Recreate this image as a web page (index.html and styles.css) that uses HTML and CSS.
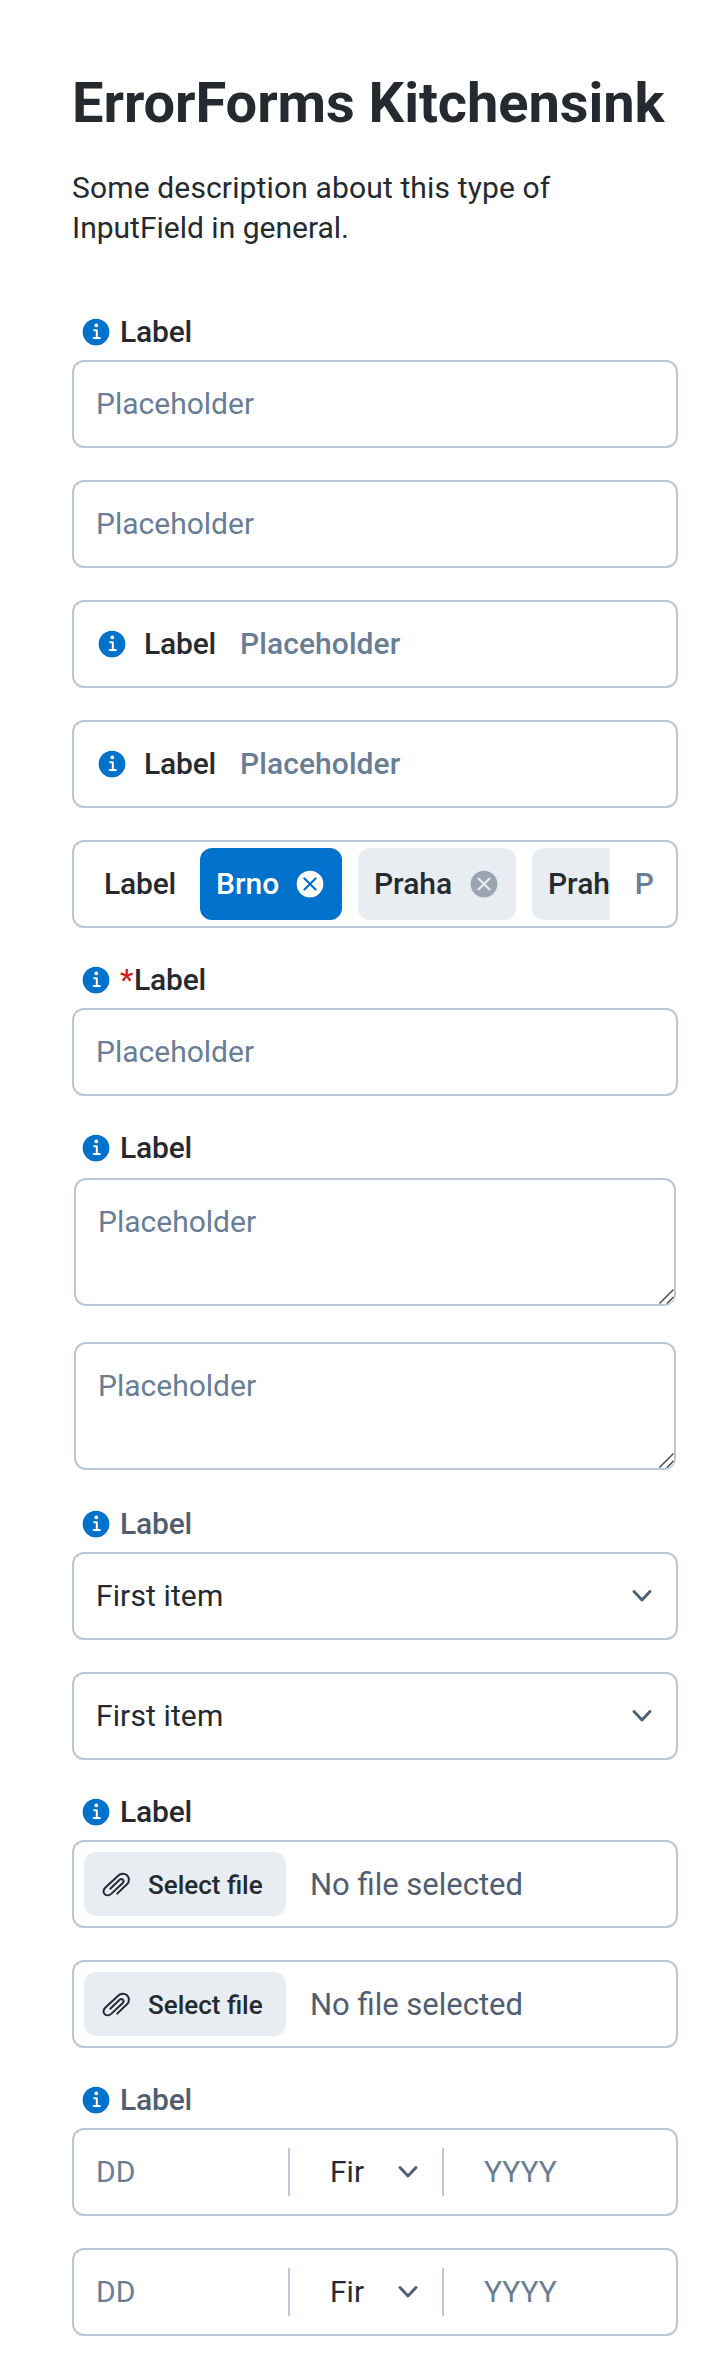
FILE: index.html
```
<!DOCTYPE html>
<html lang="en">
<head>
<meta charset="utf-8">
<title>ErrorForms Kitchensink</title>
<link rel="stylesheet" href="styles.css">
</head>
<body>
<svg class="sprite" aria-hidden="true">
  <symbol id="info" viewBox="0 0 24 24"><circle cx="12" cy="12" r="10" fill="#0172cb"/><circle cx="12.2" cy="7.1" r="1.4" fill="#fff"/><path d="M10.6 10.7h2v5.800M10.300 16.500h4.600" fill="none" stroke="#fff" stroke-width="1.500" stroke-linecap="round" stroke-linejoin="round"/></symbol>
  <symbol id="chevron" viewBox="0 0 24 24"><path d="M6 8.700 12 15l6-6.300" fill="none" stroke="#4f5e71" stroke-width="2.200" stroke-linecap="round" stroke-linejoin="round"/></symbol>
  <symbol id="close" viewBox="0 0 24 24"><circle cx="12" cy="12" r="10" fill="currentColor"/><path d="m7.800 7.800 8.400 8.400m0-8.400-8.400 8.400" fill="none" stroke="var(--cross)" stroke-width="1.600" stroke-linecap="round"/></symbol>
  <symbol id="clip" viewBox="0 0 24 24"><path d="m12.900 19.200 7.300-7c2.300-2.200 1.600-5.200.2-6.600-2-1.900-4.900-1.600-6.600 0L4.100 14.700c-1.900 1.800-1.800 3.700-.6 4.900 1.300 1.300 3.400 1.200 4.900-.2l8.500-8c1-1 .9-2 .3-2.600-.7-.7-1.800-.6-2.700.2l-6.800 6.500" fill="none" stroke="#252a31" stroke-width="1.500" stroke-linecap="round" stroke-linejoin="round"/></symbol>
</svg>
<main class="page">
  <h1 class="title">ErrorForms Kitchensink</h1>
  <p class="description"><span class="lead">Some description about this type of</span> InputField in general.</p>
  <div class="stack">
    <div class="field">
      <div class="label"><svg class="icon"><use href="#info"/></svg><span>Label</span></div>
      <div class="box"><span class="placeholder">Placeholder</span></div>
    </div>
    <div class="box"><span class="placeholder">Placeholder</span></div>
    <div class="box inline"><svg class="icon"><use href="#info"/></svg><span class="inline-label">Label</span><span class="placeholder">Placeholder</span></div>
    <div class="box inline"><svg class="icon"><use href="#info"/></svg><span class="inline-label">Label</span><span class="placeholder">Placeholder</span></div>
    <div class="box tagged">
      <span class="tag-label">Label</span>
      <div class="tags">
        <div class="tag selected"><span>Brno</span><svg class="icon"><use href="#close"/></svg></div>
        <div class="tag"><span>Praha</span><svg class="icon"><use href="#close"/></svg></div>
        <div class="tag"><span>Praha</span><svg class="icon"><use href="#close"/></svg></div>
      </div>
      <span class="placeholder">P</span>
    </div>
    <div class="field">
      <div class="label"><svg class="icon"><use href="#info"/></svg><span><span class="required">*</span>Label</span></div>
      <div class="box"><span class="placeholder">Placeholder</span></div>
    </div>
    <div class="field">
      <div class="label"><svg class="icon"><use href="#info"/></svg><span>Label</span></div>
      <div class="area"><span class="placeholder">Placeholder</span><svg class="grip" viewBox="0 0 16 16"><path d="M16 8v3l-5 5H8z" fill="#e8edf1"/><path d="M.5 15.500 15.500.5M8.500 15.500 15.500 8.500" fill="none" stroke="#444" stroke-width="1.500"/></svg></div>
    </div>
    <div class="area"><span class="placeholder">Placeholder</span><svg class="grip" viewBox="0 0 16 16"><path d="M16 8v3l-5 5H8z" fill="#e8edf1"/><path d="M.5 15.500 15.500.5M8.500 15.500 15.500 8.500" fill="none" stroke="#444" stroke-width="1.500"/></svg></div>
    <div class="field">
      <div class="label muted"><svg class="icon"><use href="#info"/></svg><span>Label</span></div>
      <div class="box select"><span>First item</span><svg class="icon"><use href="#chevron"/></svg></div>
    </div>
    <div class="box select"><span>First item</span><svg class="icon"><use href="#chevron"/></svg></div>
    <div class="field">
      <div class="label"><svg class="icon"><use href="#info"/></svg><span>Label</span></div>
      <div class="box file"><div class="button"><svg class="icon"><use href="#clip"/></svg><span class="button-text">Select file</span></div><span class="file-name">No file selected</span></div>
    </div>
    <div class="box file"><div class="button"><svg class="icon"><use href="#clip"/></svg><span class="button-text">Select file</span></div><span class="file-name">No file selected</span></div>
    <div class="field">
      <div class="label muted"><svg class="icon"><use href="#info"/></svg><span>Label</span></div>
      <div class="box date"><span class="placeholder">DD</span><div class="month"><span>Fir</span><svg class="icon"><use href="#chevron"/></svg></div><span class="placeholder year">YYYY</span></div>
    </div>
    <div class="box date"><span class="placeholder">DD</span><div class="month"><span>Fir</span><svg class="icon"><use href="#chevron"/></svg></div><span class="placeholder year">YYYY</span></div>
  </div>
</main>
</body>
</html>
```
FILE: styles.css
```
* { box-sizing: border-box; }
body {
  margin: 0;
  background: #fff;
  color: #252a31;
  font: 400 30px/40px Roboto, sans-serif;
}
.sprite { display: none; }
.page { padding: 71px 40px 40px 72px; }
.title { margin: 0; font-size: 56px; line-height: 64px; font-weight: 700; letter-spacing: -.06px; white-space: nowrap; }
.description { margin: 33px 0 64px; width: 500px; }
.lead { letter-spacing: .14px; }
.stack { display: flex; flex-direction: column; gap: 32px; }
.field { display: flex; flex-direction: column; gap: 8px; }
.icon { flex: none; width: 32px; height: 32px; }
.label {
  display: flex;
  align-items: center;
  gap: 8px;
  height: 40px;
  padding-left: 8px;
  font-weight: 500;
  letter-spacing: -.2px;
}
.muted { color: #4f5e71; }
.required { margin-right: 1px; color: #d21c1c; }
.placeholder { color: #697d95; }
.box {
  display: flex;
  align-items: center;
  width: 606px;
  height: 88px;
  padding: 0 22px;
  border: 2px solid #bac7d5;
  border-radius: 12px;
}
.inline { font-weight: 500; }
.inline .placeholder { letter-spacing: .08px; }
.inline-label { margin: 0 24px 0 16px; letter-spacing: -.2px; }
.tagged { padding-left: 30px; font-weight: 500; }
.tag-label { width: 96px; letter-spacing: -.2px; }
.tags { display: flex; gap: 16px; width: 410px; margin-right: 25px; overflow: hidden; }
.tag {
  --cross: #e8edf1;
  display: flex;
  flex: none;
  align-items: center;
  justify-content: space-between;
  width: 158px;
  height: 72px;
  padding: 0 16px;
  border-radius: 12px;
  background: #e8edf1;
}
.tag .icon { color: #9ba5b2; }
.tag.selected { --cross: #0172cb; width: 142px; background: #0172cb; color: #fff; }
.tag.selected .icon { color: #fff; }
.area {
  position: relative;
  width: 602px;
  height: 128px;
  margin: 2px;
  padding: 22px;
  border: 2px solid #bac7d5;
  border-radius: 12px;
}
.grip { position: absolute; right: 0; bottom: 0; width: 15px; height: 15px; }
.select { justify-content: space-between; padding-right: 18px; letter-spacing: .12px; }
.file { padding-left: 10px; }
.button {
  display: flex;
  align-items: center;
  gap: 16px;
  width: 202px;
  height: 64px;
  padding-left: 16px;
  border-radius: 12px;
  background: #e8edf1;
  font-size: 26px;
  font-weight: 500;
}
.button-text { padding-top: 2px; }
.file-name { margin-left: 24px; padding-top: 2px; color: #4f5e71; font-size: 31px; }
.date .placeholder { width: 192px; }
.month {
  display: flex;
  align-items: center;
  justify-content: space-between;
  width: 156px;
  height: 48px;
  padding: 0 18px 0 40px;
  border: solid #bac7d5;
  border-width: 0 2px;
}
.date .year { width: auto; margin-left: 40px; }
```
